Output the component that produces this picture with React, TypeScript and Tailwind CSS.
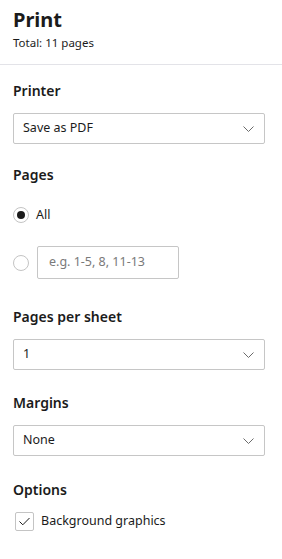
const Chevron = () => (
  <svg width="11" height="6" viewBox="0 0 11 6" fill="none" className="shrink-0">
    <path d="M0.5 0.5 L5.5 5.5 L10.5 0.5" stroke="#6b6b6b" strokeWidth="1" />
  </svg>
)

const Label = ({ children }: any) => (
  <div className="text-[14px] leading-[20px] font-semibold text-[#1b1b1b]">{children}</div>
)

const Select = ({ value }: any) => (
  <div className="mt-[12px] h-[31px] w-[252px] rounded-[2px] border border-[#c6c6c6] flex items-center justify-between pl-[9px] pr-[10px] text-[12.5px] text-[#1b1b1b]">
    <span>{value}</span>
    <Chevron />
  </div>
)

const Radio = ({ checked }: any) => (
  <span className="size-[16px] rounded-full border border-[#c4c4c4] bg-white flex items-center justify-center shrink-0">
    {checked && <span className="size-[8px] rounded-full bg-[#1b1b1b]" />}
  </span>
)

export default function App() {
  return (
    <div
      className="w-[282px] h-[559px] bg-white text-[#1b1b1b] overflow-hidden"
      style={{ fontFamily: '"Noto Sans", "Open Sans", sans-serif' }}
    >
      <div className="px-[13px] pt-[6px] pb-[13px]">
        <h1 className="text-[20px] leading-[28px] font-bold">Print</h1>
        <p className="mt-[1px] text-[11.5px] leading-[16px]">Total: 11 pages</p>
      </div>
      <div className="h-px bg-[#e3e3e8]" />

      <div className="px-[13px] pt-[16px]">
        <Label>Printer</Label>
        <Select value="Save as PDF" />

        <div className="mt-[21px]">
          <Label>Pages</Label>
        </div>
        <div className="mt-[20px] flex items-center gap-[7px] h-[20px]">
          <Radio checked />
          <span className="text-[12.5px]">All</span>
        </div>
        <div className="mt-[21px] flex items-center gap-[8px]">
          <Radio />
          <div className="h-[33px] w-[142px] rounded-[2px] border border-[#c6c6c6] flex items-center pl-[11px] text-[12.5px] text-[#7a7a7a]">
            e.g. 1-5, 8, 11-13
          </div>
        </div>

        <div className="mt-[28px]">
          <Label>Pages per sheet</Label>
        </div>
        <Select value="1" />

        <div className="mt-[23px]">
          <Label>Margins</Label>
        </div>
        <Select value="None" />

        <div className="mt-[24px]">
          <Label>Options</Label>
        </div>
        <div className="mt-[11px] flex items-center gap-[7px] h-[20px] pl-[2px]">
          <span className="size-[19px] rounded-[2px] border border-[#c4c4c4] flex items-center justify-center shrink-0">
            <svg width="11" height="9" viewBox="0 0 11 9" fill="none">
              <path d="M0.5 4.5 L3.8 7.8 L10.5 1" stroke="#1b1b1b" strokeWidth="1" />
            </svg>
          </span>
          <span className="text-[12.5px]">Background graphics</span>
        </div>
      </div>
    </div>
  )
}
